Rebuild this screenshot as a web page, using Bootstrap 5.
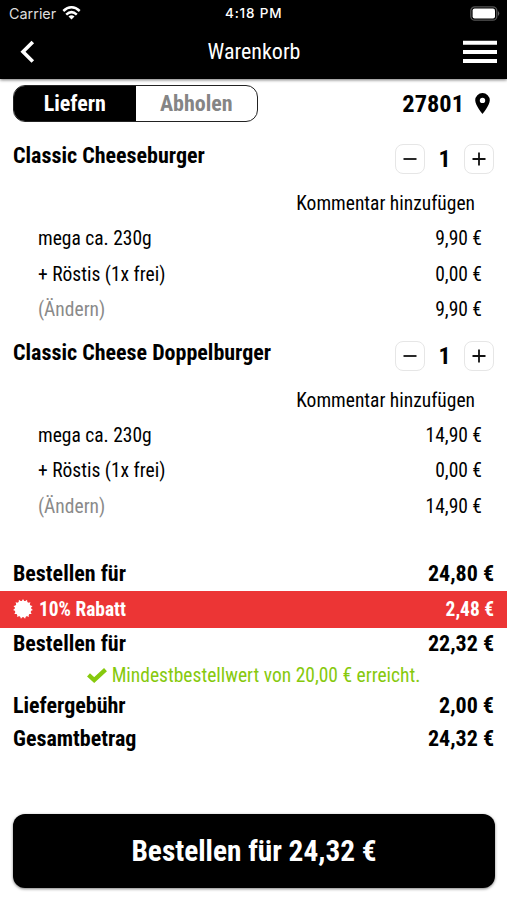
<!DOCTYPE html>
<html lang="de">
<head>
<meta charset="utf-8">
<meta name="viewport" content="width=device-width, initial-scale=1">
<title>Warenkorb</title>
<link href="https://cdn.jsdelivr.net/npm/bootstrap@5.3.0/dist/css/bootstrap.min.css" rel="stylesheet">
<style>
body{font-family:"Roboto Condensed",Roboto,sans-serif;font-stretch:75%;font-size:19.5px;line-height:1;color:#000;background:#fff;width:507px;height:900px;overflow:hidden}
.appbar{height:79px;box-shadow:0 1px 3px rgba(0,0,0,.55)}
.status{height:27px;font-family:Inter,sans-serif;font-size:13.5px;font-stretch:100%;display:grid;grid-template-columns:1fr auto 1fr;padding:0 7px 0 9px}
.carrier{font-size:14.4px;color:#ddd;padding-top:1px}
.carrier svg{margin-left:6px;margin-bottom:2px}
.clock{letter-spacing:.85px;padding-top:1px;margin-right:1.500px}
.bar{height:50px;display:grid;grid-template-columns:1fr auto 1fr;padding:0 10px 0 20px}
.t22{font-size:22px}
.title{margin-right:9px}
.topline{height:50px;padding:6px 13px 0}
.seg{width:245px;height:37px;border:1.5px solid #222;border-radius:12px;overflow:hidden}
.seg>div{width:50%}
.seg .off{color:#858585}
.zip{font-size:24.4px;height:38px;gap:11px;padding-right:4px}
.zip svg{margin-bottom:2px}
.item{height:196.7px}
.head{height:57.3px;padding:0 13px}
.name{padding-top:16.3px}
.amount{padding-top:15px}
.qty{width:30px;height:30px;border:1px solid #e6e6e6;border-radius:8px;background:#fff}
.line{height:35.3px;padding:0 25px 0 38px}
.note{padding-right:32px}
.muted{color:#8a8a8a}
.num{font-size:24px;width:39px}
.sum{padding:0 13px;font-size:22px;font-weight:700}
.rabatt{height:37px;background:#ec3535;font-size:19.4px;padding:0 13px}
.rabatt svg{margin-right:6px;margin-bottom:2px}
.ok{color:#86c90d;height:30px;gap:5px}
.order{height:74px;border-radius:12px;font-size:29.3px;margin:59px 12px 0 13px;box-shadow:0 1px 3px rgba(0,0,0,.5)}
.subtotal{height:34px;margin-top:35px}
.h32{height:32px}
.fee{height:32px}
.h33{height:33px}
</style>
</head>
<body>
<header class="appbar bg-black text-white">
  <div class="status align-items-center">
    <div class="carrier d-flex align-items-center"><span>Carrier</span>
      <svg width="19" height="14" viewBox="0 0 18 14" fill="none" stroke="#fff" stroke-width="2.500"><path d="M.8 5Q9-2.400 17.200 5M3.700 8.600Q9 3.700 14.300 8.600"/><path d="M9 13.600L6 10.500Q9 8.200 12 10.500Z" fill="#fff" stroke="none"/></svg></div>
    <span class="clock fw-medium">4:18 PM</span>
    <svg class="ms-auto" width="31" height="15" viewBox="0 0 31 15"><rect x="1.800" y=".8" width="26" height="13.400" rx="4" fill="none" stroke="#555" stroke-width="1.300"/><rect x="3.600" y="2.600" width="22.400" height="9.800" rx="2" fill="#fff"/><path d="M29.200 5Q31.200 7.500 29.200 10Z" fill="#777"/></svg>
  </div>
  <div class="bar align-items-center">
    <svg width="16" height="24" viewBox="0 0 16 24" fill="none" stroke="#fff" stroke-width="3.600"><path d="M12.800 2L3 11.800 12.800 21.600"/></svg>
    <span class="t22 title">Warenkorb</span>
    <svg class="ms-auto" width="34" height="24" viewBox="0 0 34 24" fill="#fff"><path d="M0 .8h34v4H0zM0 10h34v4H0zM0 19h34v4H0z"/></svg>
  </div>
</header>
<main>
  <div class="topline d-flex justify-content-between align-items-start">
    <div class="seg d-flex fw-bold t22">
      <div class="bg-black text-white d-flex align-items-center justify-content-center">Liefern</div>
      <div class="off d-flex align-items-center justify-content-center">Abholen</div>
    </div>
    <div class="zip d-flex align-items-center fw-bold"><span>27801</span>
      <svg width="15" height="21" viewBox="0 0 15 21"><path fill-rule="evenodd" d="M7.500 0A7.300 7.300 0 0 0 .2 7.300C.2 12.500 7.500 21 7.500 21S14.800 12.500 14.800 7.300A7.300 7.300 0 0 0 7.500 0M7.500 4.700a2.700 2.700 0 1 1 0 5.400a2.700 2.700 0 0 1 0-5.400"/></svg></div>
  </div>
  <section class="item">
    <div class="head d-flex justify-content-between align-items-start"><span class="name t22 fw-bold">Classic Cheeseburger</span>
      <div class="amount d-flex align-items-center">
        <div class="qty d-flex align-items-center justify-content-center"><svg width="14" height="14" viewBox="0 0 14 14" stroke="#111" stroke-width="1.800"><path d="M.5 7h13"/></svg></div>
        <span class="num fw-bold text-center">1</span>
        <div class="qty d-flex align-items-center justify-content-center"><svg width="14" height="14" viewBox="0 0 14 14" stroke="#111" stroke-width="1.800"><path d="M.5 7h13M7 .5v13"/></svg></div>
      </div></div>
    <div class="line note d-flex align-items-center justify-content-end">Kommentar hinzufügen</div>
    <div class="line d-flex align-items-center justify-content-between"><span>mega ca. 230g</span><span>9,90 €</span></div>
    <div class="line d-flex align-items-center justify-content-between"><span>+ Röstis (1x frei)</span><span>0,00 €</span></div>
    <div class="line d-flex align-items-center justify-content-between"><span class="muted">(Ändern)</span><span>9,90 €</span></div>
  </section>
  <section class="item">
    <div class="head d-flex justify-content-between align-items-start"><span class="name t22 fw-bold">Classic Cheese Doppelburger</span>
      <div class="amount d-flex align-items-center">
        <div class="qty d-flex align-items-center justify-content-center"><svg width="14" height="14" viewBox="0 0 14 14" stroke="#111" stroke-width="1.800"><path d="M.5 7h13"/></svg></div>
        <span class="num fw-bold text-center">1</span>
        <div class="qty d-flex align-items-center justify-content-center"><svg width="14" height="14" viewBox="0 0 14 14" stroke="#111" stroke-width="1.800"><path d="M.5 7h13M7 .5v13"/></svg></div>
      </div></div>
    <div class="line note d-flex align-items-center justify-content-end">Kommentar hinzufügen</div>
    <div class="line d-flex align-items-center justify-content-between"><span>mega ca. 230g</span><span>14,90 €</span></div>
    <div class="line d-flex align-items-center justify-content-between"><span>+ Röstis (1x frei)</span><span>0,00 €</span></div>
    <div class="line d-flex align-items-center justify-content-between"><span class="muted">(Ändern)</span><span>14,90 €</span></div>
  </section>
  <section>
    <div class="sum subtotal d-flex align-items-center justify-content-between"><span>Bestellen für</span><span>24,80 €</span></div>
    <div class="rabatt text-white fw-bold d-flex align-items-center">
      <svg width="20" height="20" viewBox="-10 -10 20 20" fill="#fff"><circle r="8.300"/><path id="tooth" d="M0-10L8.660 5H-8.660Z"/><use href="#tooth" transform="rotate(24)"/><use href="#tooth" transform="rotate(48)"/><use href="#tooth" transform="rotate(72)"/><use href="#tooth" transform="rotate(96)"/></svg>
      <span class="me-auto">10% Rabatt</span><span>2,48 €</span></div>
    <div class="sum h32 d-flex align-items-center justify-content-between"><span>Bestellen für</span><span>22,32 €</span></div>
    <div class="ok d-flex align-items-center justify-content-center">
      <svg width="20" height="15" viewBox="0 0 20 15" fill="none" stroke="#86c90d" stroke-width="4.300"><path d="M1.500 6.800L7.200 12 18.500 1.700"/></svg><span>Mindestbestellwert von 20,00 € erreicht.</span></div>
    <div class="sum fee d-flex align-items-center justify-content-between"><span>Liefergebühr</span><span>2,00 €</span></div>
    <div class="sum h33 d-flex align-items-center justify-content-between"><span>Gesamtbetrag</span><span>24,32 €</span></div>
  </section>
  <div class="order bg-black text-white fw-bold d-flex align-items-center justify-content-center">Bestellen für 24,32 €</div>
</main>
<script src="https://cdn.jsdelivr.net/npm/bootstrap@5.3.0/dist/js/bootstrap.bundle.min.js"></script>
</body>
</html>
